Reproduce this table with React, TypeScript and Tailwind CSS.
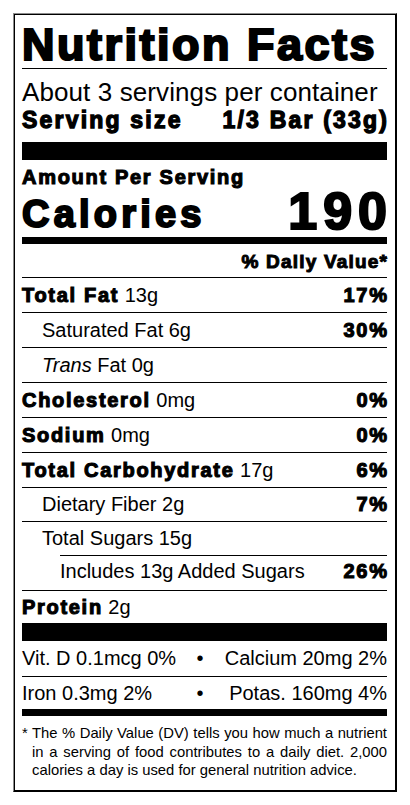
const B = "font-bold tracking-[1.7px] [-webkit-text-stroke:1.1px_#000]";
const BR = "font-bold tracking-[1.7px] mr-[-1.7px] [-webkit-text-stroke:1.1px_#000]";

export default function App() {
  return (
    <div className="min-h-screen bg-white pt-[13px] font-['Liberation_Sans',Arial,sans-serif] text-black">
      <div className="mx-auto w-[384px] border border-t-[#8c8c8c] border-l-[#8c8c8c] border-r-black border-b-black pb-[11px] pl-[8px] pr-[9px] pt-[8px] shadow-[inset_0_0_0_1px_#000]">
        <h1 className="whitespace-nowrap border-b border-black text-[45px] font-bold leading-[46px] tracking-[2.5px] [-webkit-text-stroke:2.2px_#000]">
          Nutrition Facts
        </h1>
        <div className="mt-[9px] whitespace-nowrap text-[26px] leading-[28px] tracking-[0.1px]">
          About 3 servings per container
        </div>
        <div className="flex justify-between whitespace-nowrap text-[23px] font-bold leading-[28px] tracking-[2.2px] [-webkit-text-stroke:1.3px_#000]">
          <span>Serving size</span>
          <span className="mr-[-2.2px]">1/3 Bar (33g)</span>
        </div>
        <div className="mt-[8px] h-[18px] bg-black" />
        <div className={"mt-[6px] text-[20px] leading-[22px] " + B}>Amount Per Serving</div>
        <div className="flex h-[49px] items-end justify-between">
          <span className="pb-[3px] text-[38px] font-bold leading-[40px] tracking-[4.2px] [-webkit-text-stroke:2px_#000]">
            Calories
          </span>
          <span className="mr-[-6px] text-[52px] font-bold leading-[52px] tracking-[6px] [-webkit-text-stroke:2.2px_#000]">
            190
          </span>
        </div>
        <div className="h-[7px] bg-black" />
        <div className="border-b border-black pb-[3px] pt-[6px] text-right text-[19px] font-bold leading-[24px] tracking-[1.2px] [-webkit-text-stroke:1px_#000]">
          <span className="mr-[-1.2px]">% Daily Value*</span>
        </div>

        <div className="flex justify-between border-b border-black text-[20px] leading-[34px]">
          <span>
            <b className={B}>Total Fat</b> 13g
          </span>
          <b className={BR}>17%</b>
        </div>
        <div className="flex justify-between border-b border-black pl-[20px] text-[20px] leading-[34px]">
          <span>Saturated Fat 6g</span>
          <b className={BR}>30%</b>
        </div>
        <div className="flex justify-between border-b border-black pl-[20px] text-[20px] leading-[34px]">
          <span>
            <i>Trans</i> Fat 0g
          </span>
        </div>
        <div className="flex justify-between border-b border-black text-[20px] leading-[34px]">
          <span>
            <b className={B}>Cholesterol</b> 0mg
          </span>
          <b className={BR}>0%</b>
        </div>
        <div className="flex justify-between border-b border-black text-[20px] leading-[34px]">
          <span>
            <b className={B}>Sodium</b> 0mg
          </span>
          <b className={BR}>0%</b>
        </div>
        <div className="flex justify-between border-b border-black text-[20px] leading-[34px]">
          <span>
            <b className={B}>Total Carbohydrate</b> 17g
          </span>
          <b className={BR}>6%</b>
        </div>
        <div className="flex justify-between border-b border-black pl-[20px] text-[20px] leading-[33px]">
          <span>Dietary Fiber 2g</span>
          <b className={BR}>7%</b>
        </div>
        <div className="flex justify-between pl-[20px] text-[20px] leading-[33px]">
          <span>Total Sugars 15g</span>
        </div>
        <div className="border-b border-black">
          <div className="ml-[38px] flex justify-between border-t border-black pb-[4px] text-[20px] leading-[30px]">
            <span>Includes 13g Added Sugars</span>
            <b className={BR}>26%</b>
          </div>
        </div>
        <div className="text-[20px] leading-[32px]">
          <b className={B}>Protein</b> 2g
        </div>
        <div className="h-[18px] bg-black" />
        <div className="grid grid-cols-[172px_12px_1fr] whitespace-nowrap border-b border-black text-[20px] leading-[35px]">
          <span>Vit. D 0.1mcg 0%</span>
          <span className="text-center">•</span>
          <span className="text-right">Calcium 20mg 2%</span>
        </div>
        <div className="grid grid-cols-[172px_12px_1fr] whitespace-nowrap text-[20px] leading-[32px]">
          <span>Iron 0.3mg 2%</span>
          <span className="text-center">•</span>
          <span className="text-right">Potas. 160mg 4%</span>
        </div>
        <div className="h-[7px] bg-black" />
        <div className="flex pt-[8px] text-[14.8px] leading-[18.5px]">
          <span className="w-[10px] shrink-0">*</span>
          <div className="min-w-0 flex-1">
            <div className="text-justify [text-align-last:justify]">
              The % Daily Value (DV) tells you how much a nutrient
            </div>
            <div className="text-justify [text-align-last:justify]">
              in a serving of food contributes to a daily diet. 2,000
            </div>
            <div>calories a day is used for general nutrition advice.</div>
          </div>
        </div>
      </div>
    </div>
  );
}
